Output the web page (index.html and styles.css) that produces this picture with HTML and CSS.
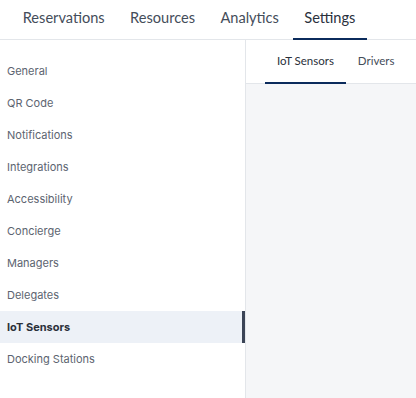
FILE: index.html
```html
<!DOCTYPE html>
<html lang="en">
<head>
  <meta charset="UTF-8">
  <title>Settings</title>
  <link rel="stylesheet" href="styles.css">
</head>
<body>
  <nav class="topnav">
    <a class="tab">Reservations</a>
    <a class="tab">Resources</a>
    <a class="tab">Analytics</a>
    <a class="tab active">Settings</a>
  </nav>

  <div class="main">
    <aside class="sidebar">
      <a class="item">General</a>
      <a class="item">QR Code</a>
      <a class="item">Notifications</a>
      <a class="item">Integrations</a>
      <a class="item">Accessibility</a>
      <a class="item">Concierge</a>
      <a class="item">Managers</a>
      <a class="item">Delegates</a>
      <a class="item active">IoT Sensors</a>
      <a class="item">Docking Stations</a>
    </aside>

    <section class="content">
      <div class="subtabs">
        <a class="subtab active">IoT Sensors</a>
        <a class="subtab">Drivers</a>
      </div>
      <div class="panel"></div>
    </section>
  </div>
</body>
</html>
```

FILE: styles.css
```css
:root {
  --navy: #0b2b5c;
  --border: #e3e6ea;
  --text: #444d5a;
  --muted: #5c6470;
}

* {
  box-sizing: border-box;
}

body {
  margin: 0;
  background: #fff;
  font-family: 'Inter', sans-serif;
  height: 398px;
  display: flex;
  flex-direction: column;
  overflow: hidden;
}

.topnav {
  display: flex;
  gap: 2px;
  padding-left: 11px;
  height: 40px;
  border-bottom: 1px solid var(--border);
  font-family: 'Lato', sans-serif;
  font-size: 14.6px;
}

.tab {
  display: flex;
  align-items: center;
  padding: 0 11.7px 4px;
  color: var(--text);
  border-bottom: 2px solid transparent;
  margin-bottom: -1px;
}

.tab.active {
  color: #2a313d;
  border-bottom-color: var(--navy);
}

.main {
  flex: 1;
  display: flex;
}

.sidebar {
  width: 246px;
  border-right: 1px solid var(--border);
  padding-top: 15px;
  display: flex;
  flex-direction: column;
}

.item {
  height: 32px;
  display: flex;
  align-items: center;
  padding-left: 7px;
  font-size: 11px;
  color: var(--muted);
}

.item.active {
  background: #edf1f7;
  color: #2a303a;
  font-weight: 700;
  box-shadow: inset -3px 0 0 #3b4456;
}

.content {
  flex: 1;
  display: flex;
  flex-direction: column;
}

.subtabs {
  display: flex;
  padding-left: 19px;
  height: 44px;
  border-bottom: 1px solid var(--border);
  font-family: 'Lato', sans-serif;
  font-size: 11.5px;
}

.subtab {
  display: flex;
  align-items: center;
  padding: 0 12px 1px;
  color: var(--text);
  border-bottom: 2px solid transparent;
  margin-bottom: -1px;
}

.subtab.active {
  color: #2a303a;
  border-bottom-color: var(--navy);
}

.panel {
  flex: 1;
  background: #f5f6f8;
}
```
